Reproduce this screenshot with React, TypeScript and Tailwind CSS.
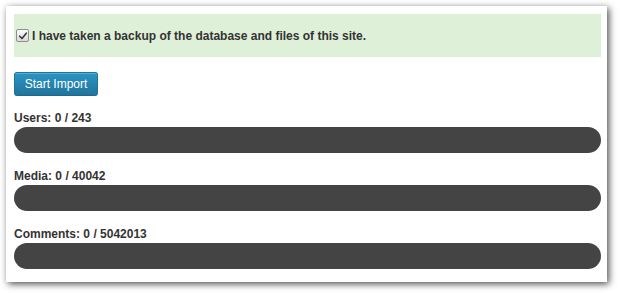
import React from "react";

const counters = [
  { label: "Users", done: 0, total: 243 },
  { label: "Media", done: 0, total: 40042 },
  { label: "Comments", done: 0, total: 5042013 },
];

export default function App() {
  return (
    <div className="min-h-[293px] w-[620px] bg-white pl-[6px] pt-[6px] font-['Liberation_Sans',Arial,sans-serif] text-[#333]">
      <div className="w-[601px] bg-white pb-[13px] pl-2 pr-[6px] pt-2 shadow-[2px_2px_7px_rgba(0,0,0,0.7)]">
        <div className="flex h-[43px] items-center bg-[#dff0d8] pl-[2px]">
          <label className="flex items-center gap-[3px] text-[12px] font-bold leading-[14px]">
            <span className="flex h-[13px] w-[13px] items-center justify-center rounded-[2px] border border-[#8f8f8f] bg-gradient-to-b from-[#fcfcfc] to-[#d9d9d9]">
              <svg viewBox="0 0 12 12" className="h-[10px] w-[10px]">
                <path d="M2 6.3 L4.8 9 L10 2.6" fill="none" stroke="#3a3a3a" strokeWidth="2" strokeLinecap="round" strokeLinejoin="round" />
              </svg>
            </span>
            I have taken a backup of the database and files of this site.
          </label>
        </div>

        <button className="mt-[15px] flex h-[24px] w-[84px] items-center justify-center rounded-[3px] border border-[#21759b] border-b-[#1e6a8d] bg-gradient-to-b from-[#2a95c5] to-[#21759b] text-[12px] text-white shadow-[inset_0_1px_0_rgba(120,200,230,0.5)]">
          Start Import
        </button>

        <div className="mt-[15px] flex flex-col gap-[16px]">
          {counters.map((c) => (
            <div key={c.label} className="flex flex-col gap-[2px]">
              <div className="text-[12px] font-bold leading-[14px]">
                {c.label}: {c.done} / {c.total}
              </div>
              <div className="h-[26px] w-full rounded-full bg-[#444]" />
            </div>
          ))}
        </div>
      </div>
    </div>
  );
}
